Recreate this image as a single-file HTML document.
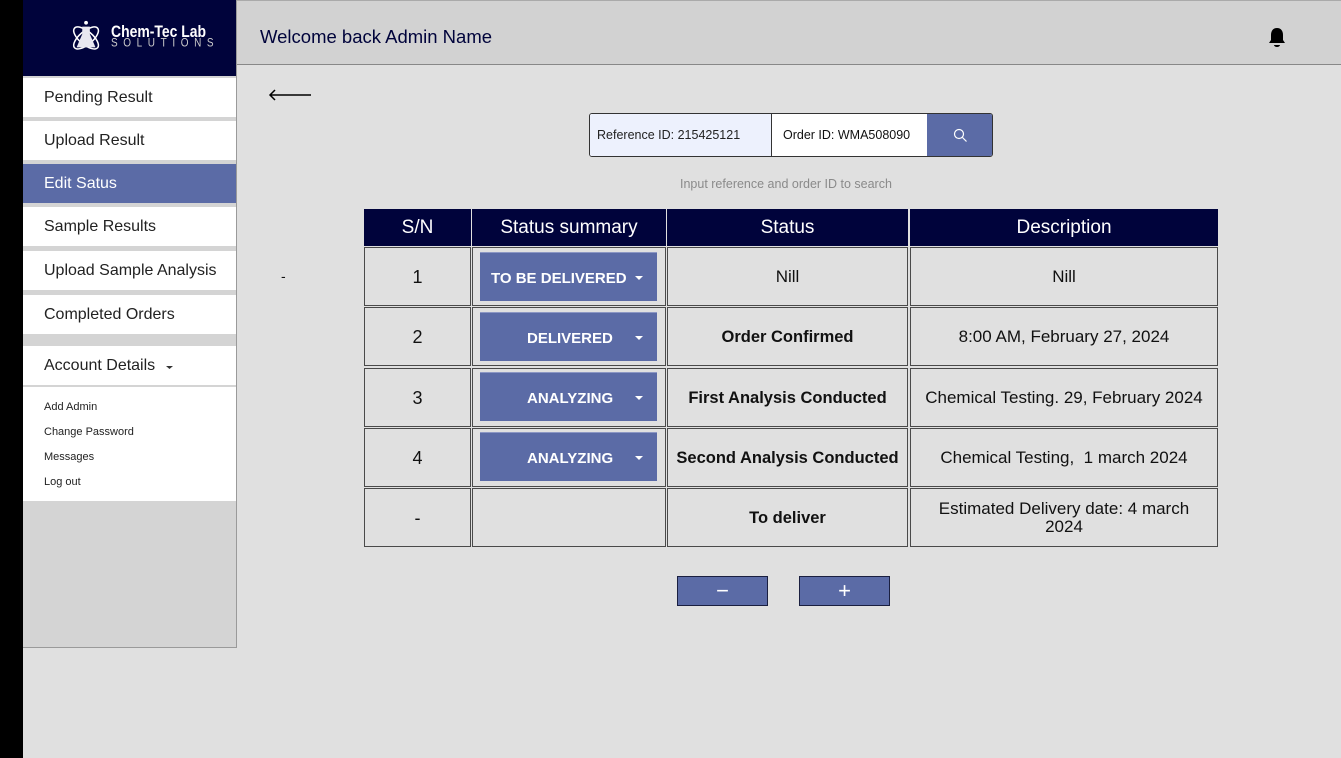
<!DOCTYPE html>
<html><head><meta charset="utf-8">
<style>
*{margin:0;padding:0;box-sizing:border-box}
body{width:1341px;height:758px;overflow:hidden;background:#e0e0e0;font-family:"Liberation Sans",sans-serif;position:relative;color:#111}
.a{position:absolute}
.side{left:23px;top:0;width:214px;height:648px;background:#d4d4d4;border-right:1px solid #9a9a9a;border-bottom:1px solid #9a9a9a}
.logo{left:23px;top:0;width:213px;height:76px;background:#00033b}
.mi{left:23px;width:213px;height:39px;background:#fff;font-size:16px;color:#222;padding-left:21px;line-height:40px}
.sub{left:44px;font-size:11px;color:#222}
.cell{position:absolute;border:1px solid #4a4a4a;background:#e0e0e0;display:flex;align-items:center;justify-content:center;text-align:center;font-size:17px;color:#111;padding-top:1px}
.hd{background:#00033b;color:#fff;font-size:19px;border-color:#00033b}
.b{font-weight:bold;font-size:16.5px}
.dd{position:absolute;background:#5b6ba6;color:#fff;font-weight:bold;font-size:15px;display:flex;align-items:center;border-top:1px solid #8c97c4;padding-top:3px}
.dd svg{position:absolute;right:13px;top:23px}
.btn{position:absolute;background:#5b6ba6;border:1px solid #1a1f40;color:#fff;font-size:22px;text-align:center;line-height:28px}
</style></head><body>
<div class="a" style="left:0;top:0;width:23px;height:758px;background:#000"></div>
<div class="a side"></div>
<div class="a logo">
<svg class="a" style="left:45px;top:19px" width="38" height="36" viewBox="0 0 40 38">
<g fill="none" stroke="#fff" stroke-width="1.6">
<ellipse cx="19" cy="20" rx="16" ry="7" transform="rotate(-40 19 20)"/>
<ellipse cx="19" cy="20" rx="16" ry="7" transform="rotate(40 19 20)"/>
</g>
<path d="M15 8h8v8l6 14h-20l6-14z" fill="#e8e8f0"/>
<circle cx="19" cy="4" r="2" fill="#fff"/>
</svg>
<div class="a" style="left:88px;top:23px;color:#fff;font-family:'Liberation Sans Narrow','Liberation Sans',sans-serif;font-weight:bold;font-size:17px;line-height:17px;transform:scaleX(.82);transform-origin:left">Chem-Tec Lab</div>
<div class="a" style="left:88px;top:39px;color:#ccc;font-size:10px;letter-spacing:5.6px;line-height:10px;transform:scaleY(1.2)">SOLUTIONS</div>
</div>
<div class="a mi" style="top:78px">Pending Result</div>
<div class="a mi" style="top:121px">Upload Result</div>
<div class="a mi" style="top:164px;background:#5b6ba6;color:#fff">Edit Satus</div>
<div class="a mi" style="top:207px">Sample Results</div>
<div class="a mi" style="top:251px">Upload Sample Analysis</div>
<div class="a mi" style="top:295px">Completed Orders</div>
<div class="a mi" style="top:346px">Account Details <svg width="10" height="6" style="margin-left:5px"><path d="M1 2h7l-3.5 3z" fill="#333"/></svg></div>
<div class="a" style="left:23px;top:387px;width:213px;height:114px;background:#fff"></div>
<div class="a sub" style="top:401px">Add Admin</div>
<div class="a sub" style="top:426px">Change Password</div>
<div class="a sub" style="top:451px">Messages</div>
<div class="a sub" style="top:476px">Log out</div>

<div class="a" style="left:237px;top:0;width:1104px;height:65px;background:#d2d2d2;border-bottom:1px solid #888;border-top:1px solid #aaa"></div>
<div class="a" style="left:260px;top:26px;font-size:18.5px;color:#00033b">Welcome back Admin Name</div>
<svg class="a" style="left:1267px;top:27px" width="20" height="22" viewBox="0 0 20 22"><path d="M10 1c-4 0-6 3-6 7v5l-2 3h16l-2-3V8c0-4-2-7-6-7z" fill="#000"/><path d="M7 18h6a3 2 0 0 1-6 0z" fill="#000"/></svg>

<svg class="a" style="left:267px;top:88px" width="46" height="14"><path d="M44 7H3M8 2L3 7l5 5" fill="none" stroke="#000" stroke-width="1.5"/></svg>
<div class="a" style="left:281px;top:268px;font-size:14px">-</div>

<div class="a" style="left:589px;top:113px;width:404px;height:44px;border:1px solid #333;border-radius:3px;overflow:hidden;background:#fff">
<div class="a" style="left:0;top:0;width:182px;height:42px;background:#edf1fd;border-right:1px solid #333;font-size:12.5px;line-height:43px;padding-left:7px;color:#222">Reference ID: 215425121</div>
<div class="a" style="left:193px;top:0;font-size:12.5px;line-height:43px;color:#111">Order ID: WMA508090</div>
<div class="a" style="left:337px;top:0;width:66px;height:42px;background:#5b6ba6"><svg class="a" style="left:26px;top:14px" width="15" height="15"><circle cx="6" cy="6" r="4.5" fill="none" stroke="#fff" stroke-width="1.2"/><path d="M9.5 9.5l4 4" stroke="#fff" stroke-width="1.2"/></svg></div>
</div>
<div class="a" style="left:680px;top:177px;font-size:12.5px;color:#8a8a8a">Input reference and order ID to search</div>

<div class="cell hd" style="left:364px;top:209px;width:107px;height:37px">S/N</div>
<div class="cell hd" style="left:472px;top:209px;width:194px;height:37px">Status summary</div>
<div class="cell hd" style="left:667px;top:209px;width:241px;height:37px">Status</div>
<div class="cell hd" style="left:910px;top:209px;width:308px;height:37px">Description</div>

<div class="cell" style="left:364px;top:247px;width:107px;height:59px;font-size:18px">1</div>
<div class="cell" style="left:472px;top:247px;width:194px;height:59px"></div>
<div class="cell" style="left:667px;top:247px;width:241px;height:59px">Nill</div>
<div class="cell" style="left:910px;top:247px;width:308px;height:59px">Nill</div>

<div class="cell" style="left:364px;top:307px;width:107px;height:59px;font-size:18px">2</div>
<div class="cell" style="left:472px;top:307px;width:194px;height:59px"></div>
<div class="cell b" style="left:667px;top:307px;width:241px;height:59px">Order Confirmed</div>
<div class="cell" style="left:910px;top:307px;width:308px;height:59px">8:00 AM, February 27, 2024</div>

<div class="cell" style="left:364px;top:368px;width:107px;height:59px;font-size:18px">3</div>
<div class="cell" style="left:472px;top:368px;width:194px;height:59px"></div>
<div class="cell b" style="left:667px;top:368px;width:241px;height:59px">First Analysis Conducted</div>
<div class="cell" style="left:910px;top:368px;width:308px;height:59px">Chemical Testing. 29, February 2024</div>

<div class="cell" style="left:364px;top:428px;width:107px;height:59px;font-size:18px">4</div>
<div class="cell" style="left:472px;top:428px;width:194px;height:59px"></div>
<div class="cell b" style="left:667px;top:428px;width:241px;height:59px">Second Analysis Conducted</div>
<div class="cell" style="left:910px;top:428px;width:308px;height:59px">Chemical Testing,&nbsp; 1 march 2024</div>

<div class="cell" style="left:364px;top:488px;width:107px;height:59px;font-size:18px">-</div>
<div class="cell" style="left:472px;top:488px;width:194px;height:59px"></div>
<div class="cell b" style="left:667px;top:488px;width:241px;height:59px">To deliver</div>
<div class="cell" style="left:910px;top:488px;width:308px;height:59px;line-height:18px;padding:0 10px">Estimated Delivery date: 4 march<br>2024</div>

<div class="dd" style="left:480px;top:252px;width:177px;height:49px;padding-left:11px">TO BE DELIVERED<svg width="9" height="5"><path d="M0 0h8l-4 4z" fill="#fff"/></svg></div>
<div class="dd" style="left:480px;top:312px;width:177px;height:49px;padding-left:47px">DELIVERED<svg width="9" height="5"><path d="M0 0h8l-4 4z" fill="#fff"/></svg></div>
<div class="dd" style="left:480px;top:372px;width:177px;height:49px;padding-left:47px">ANALYZING<svg width="9" height="5"><path d="M0 0h8l-4 4z" fill="#fff"/></svg></div>
<div class="dd" style="left:480px;top:432px;width:177px;height:49px;padding-left:47px">ANALYZING<svg width="9" height="5"><path d="M0 0h8l-4 4z" fill="#fff"/></svg></div>

<div class="btn" style="left:677px;top:576px;width:91px;height:30px">−</div>
<div class="btn" style="left:799px;top:576px;width:91px;height:30px">+</div>
</body></html>
